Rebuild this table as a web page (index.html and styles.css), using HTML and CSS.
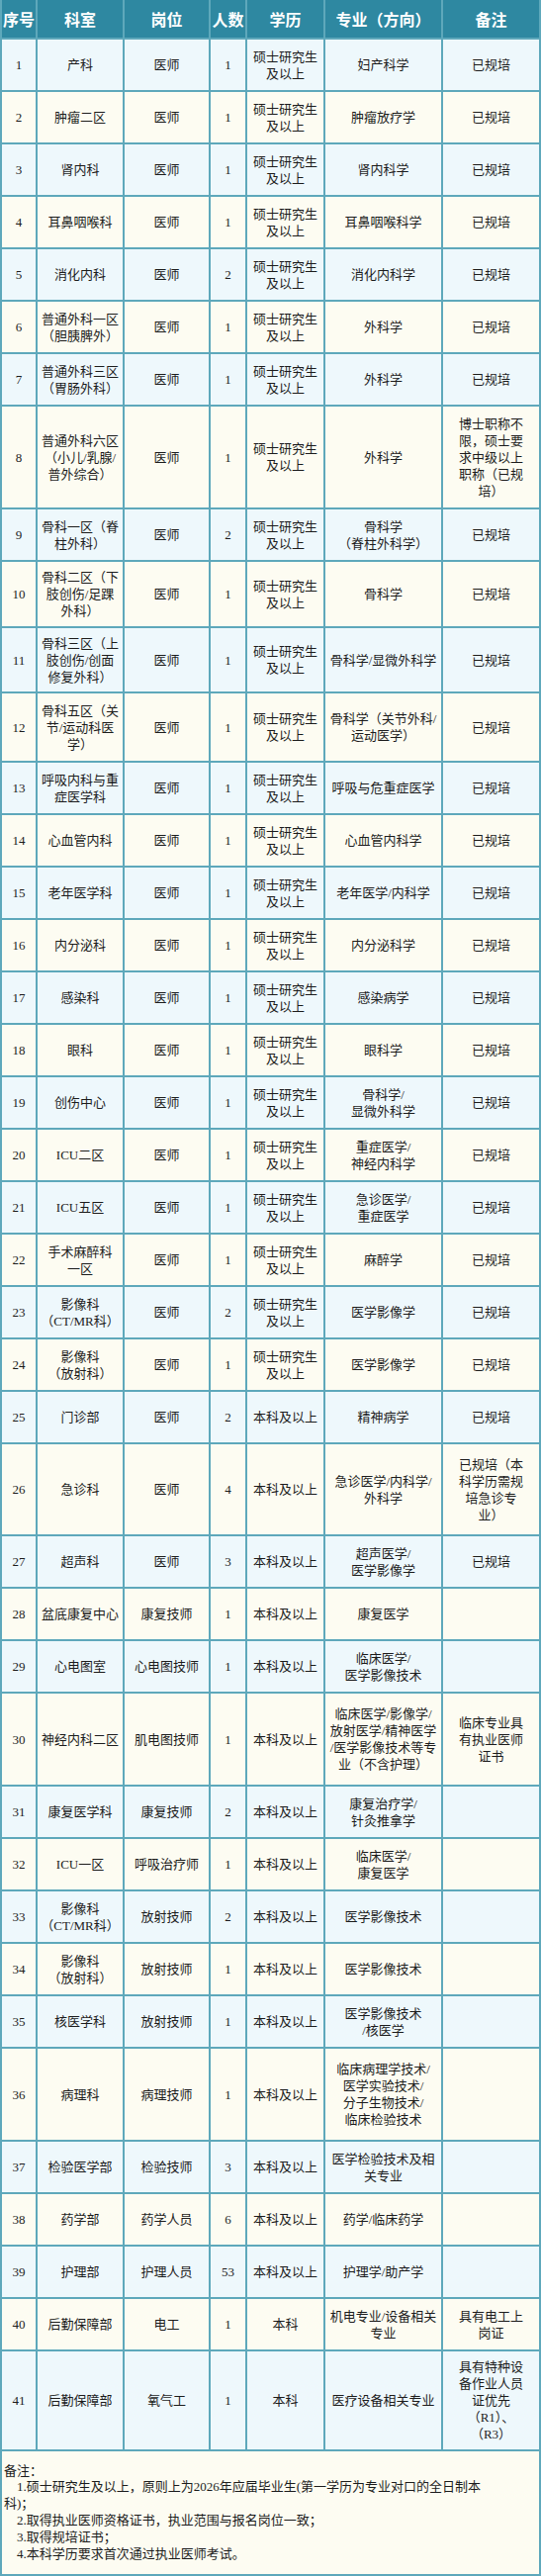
FILE: index.html
```html
<!DOCTYPE html>
<html lang="zh-CN">
<head>
<meta charset="utf-8">
<title>招聘岗位表</title>
<link rel="stylesheet" href="styles.css">
</head>
<body>
<table class="jobs">
<thead>
<tr class="head">
<th class="c1">序号</th><th class="c2">科室</th><th class="c3">岗位</th><th class="c4">人数</th><th class="c5">学历</th><th class="c6">专业（方向）</th><th class="c7">备注</th>
</tr>
</thead>
<tbody>
<tr class="odd h53"><td>1</td><td>产科</td><td>医师</td><td>1</td><td>硕士研究生<br>及以上</td><td>妇产科学</td><td>已规培</td></tr>
<tr class="even h53"><td>2</td><td>肿瘤二区</td><td>医师</td><td>1</td><td>硕士研究生<br>及以上</td><td>肿瘤放疗学</td><td>已规培</td></tr>
<tr class="odd h53"><td>3</td><td>肾内科</td><td>医师</td><td>1</td><td>硕士研究生<br>及以上</td><td>肾内科学</td><td>已规培</td></tr>
<tr class="even h53"><td>4</td><td>耳鼻咽喉科</td><td>医师</td><td>1</td><td>硕士研究生<br>及以上</td><td>耳鼻咽喉科学</td><td>已规培</td></tr>
<tr class="odd h53"><td>5</td><td>消化内科</td><td>医师</td><td>2</td><td>硕士研究生<br>及以上</td><td>消化内科学</td><td>已规培</td></tr>
<tr class="even h53"><td>6</td><td>普通外科一区<br>（胆胰脾外）</td><td>医师</td><td>1</td><td>硕士研究生<br>及以上</td><td>外科学</td><td>已规培</td></tr>
<tr class="odd h53"><td>7</td><td>普通外科三区<br>（胃肠外科）</td><td>医师</td><td>1</td><td>硕士研究生<br>及以上</td><td>外科学</td><td>已规培</td></tr>
<tr class="even h104"><td>8</td><td>普通外科六区<br>（小儿/乳腺/<br>普外综合）</td><td>医师</td><td>1</td><td>硕士研究生<br>及以上</td><td>外科学</td><td>博士职称不<br>限，硕士要<br>求中级以上<br>职称（已规<br>培）</td></tr>
<tr class="odd h53"><td>9</td><td>骨科一区（脊<br>柱外科）</td><td>医师</td><td>2</td><td>硕士研究生<br>及以上</td><td>骨科学<br>（脊柱外科学）</td><td>已规培</td></tr>
<tr class="even h67"><td>10</td><td>骨科二区（下<br>肢创伤/足踝<br>外科）</td><td>医师</td><td>1</td><td>硕士研究生<br>及以上</td><td>骨科学</td><td>已规培</td></tr>
<tr class="odd h66"><td>11</td><td>骨科三区（上<br>肢创伤/创面<br>修复外科）</td><td>医师</td><td>1</td><td>硕士研究生<br>及以上</td><td>骨科学/显微外科学</td><td>已规培</td></tr>
<tr class="even h70"><td>12</td><td>骨科五区（关<br>节/运动科医<br>学）</td><td>医师</td><td>1</td><td>硕士研究生<br>及以上</td><td>骨科学（关节外科/<br>运动医学）</td><td>已规培</td></tr>
<tr class="odd h53"><td>13</td><td>呼吸内科与重<br>症医学科</td><td>医师</td><td>1</td><td>硕士研究生<br>及以上</td><td>呼吸与危重症医学</td><td>已规培</td></tr>
<tr class="even h53"><td>14</td><td>心血管内科</td><td>医师</td><td>1</td><td>硕士研究生<br>及以上</td><td>心血管内科学</td><td>已规培</td></tr>
<tr class="odd h53"><td>15</td><td>老年医学科</td><td>医师</td><td>1</td><td>硕士研究生<br>及以上</td><td>老年医学/内科学</td><td>已规培</td></tr>
<tr class="even h53"><td>16</td><td>内分泌科</td><td>医师</td><td>1</td><td>硕士研究生<br>及以上</td><td>内分泌科学</td><td>已规培</td></tr>
<tr class="odd h53"><td>17</td><td>感染科</td><td>医师</td><td>1</td><td>硕士研究生<br>及以上</td><td>感染病学</td><td>已规培</td></tr>
<tr class="even h53"><td>18</td><td>眼科</td><td>医师</td><td>1</td><td>硕士研究生<br>及以上</td><td>眼科学</td><td>已规培</td></tr>
<tr class="odd h53"><td>19</td><td>创伤中心</td><td>医师</td><td>1</td><td>硕士研究生<br>及以上</td><td>骨科学/<br>显微外科学</td><td>已规培</td></tr>
<tr class="even h53"><td>20</td><td>ICU二区</td><td>医师</td><td>1</td><td>硕士研究生<br>及以上</td><td>重症医学/<br>神经内科学</td><td>已规培</td></tr>
<tr class="odd h53"><td>21</td><td>ICU五区</td><td>医师</td><td>1</td><td>硕士研究生<br>及以上</td><td>急诊医学/<br>重症医学</td><td>已规培</td></tr>
<tr class="even h53"><td>22</td><td>手术麻醉科<br>一区</td><td>医师</td><td>1</td><td>硕士研究生<br>及以上</td><td>麻醉学</td><td>已规培</td></tr>
<tr class="odd h53"><td>23</td><td>影像科<br>（CT/MR科）</td><td>医师</td><td>2</td><td>硕士研究生<br>及以上</td><td>医学影像学</td><td>已规培</td></tr>
<tr class="even h53"><td>24</td><td>影像科<br>（放射科）</td><td>医师</td><td>1</td><td>硕士研究生<br>及以上</td><td>医学影像学</td><td>已规培</td></tr>
<tr class="odd h53"><td>25</td><td>门诊部</td><td>医师</td><td>2</td><td>本科及以上</td><td>精神病学</td><td>已规培</td></tr>
<tr class="even h93"><td>26</td><td>急诊科</td><td>医师</td><td>4</td><td>本科及以上</td><td>急诊医学/内科学/<br>外科学</td><td>已规培（本<br>科学历需规<br>培急诊专<br>业）</td></tr>
<tr class="odd h53"><td>27</td><td>超声科</td><td>医师</td><td>3</td><td>本科及以上</td><td>超声医学/<br>医学影像学</td><td>已规培</td></tr>
<tr class="even h53"><td>28</td><td>盆底康复中心</td><td>康复技师</td><td>1</td><td>本科及以上</td><td>康复医学</td><td></td></tr>
<tr class="odd h53"><td>29</td><td>心电图室</td><td>心电图技师</td><td>1</td><td>本科及以上</td><td>临床医学/<br>医学影像技术</td><td></td></tr>
<tr class="even h94"><td>30</td><td>神经内科二区</td><td>肌电图技师</td><td>1</td><td>本科及以上</td><td>临床医学/影像学/<br>放射医学/精神医学<br>/医学影像技术等专<br>业（不含护理）</td><td>临床专业具<br>有执业医师<br>证书</td></tr>
<tr class="odd h53"><td>31</td><td>康复医学科</td><td>康复技师</td><td>2</td><td>本科及以上</td><td>康复治疗学/<br>针灸推拿学</td><td></td></tr>
<tr class="even h53"><td>32</td><td>ICU一区</td><td>呼吸治疗师</td><td>1</td><td>本科及以上</td><td>临床医学/<br>康复医学</td><td></td></tr>
<tr class="odd h53"><td>33</td><td>影像科<br>（CT/MR科）</td><td>放射技师</td><td>2</td><td>本科及以上</td><td>医学影像技术</td><td></td></tr>
<tr class="even h53"><td>34</td><td>影像科<br>（放射科）</td><td>放射技师</td><td>1</td><td>本科及以上</td><td>医学影像技术</td><td></td></tr>
<tr class="odd h53"><td>35</td><td>核医学科</td><td>放射技师</td><td>1</td><td>本科及以上</td><td>医学影像技术<br>/核医学</td><td></td></tr>
<tr class="even h94"><td>36</td><td>病理科</td><td>病理技师</td><td>1</td><td>本科及以上</td><td>临床病理学技术/<br>医学实验技术/<br>分子生物技术/<br>临床检验技术</td><td></td></tr>
<tr class="odd h53"><td>37</td><td>检验医学部</td><td>检验技师</td><td>3</td><td>本科及以上</td><td>医学检验技术及相<br>关专业</td><td></td></tr>
<tr class="even h53"><td>38</td><td>药学部</td><td>药学人员</td><td>6</td><td>本科及以上</td><td>药学/临床药学</td><td></td></tr>
<tr class="odd h53"><td>39</td><td>护理部</td><td>护理人员</td><td>53</td><td>本科及以上</td><td>护理学/助产学</td><td></td></tr>
<tr class="even h53"><td>40</td><td>后勤保障部</td><td>电工</td><td>1</td><td>本科</td><td>机电专业/设备相关<br>专业</td><td>具有电工上<br>岗证</td></tr>
<tr class="odd h101"><td>41</td><td>后勤保障部</td><td>氧气工</td><td>1</td><td>本科</td><td>医疗设备相关专业</td><td>具有特种设<br>备作业人员<br>证优先<br>（R1）、<br>（R3）</td></tr>
<tr class="even notes-row"><td colspan="7" class="notes">
<div class="note-title">备注：</div>
<div class="note">1.硕士研究生及以上，原则上为2026年应届毕业生(第一学历为专业对口的全日制本<br>科)；</div>
<div class="note">2.取得执业医师资格证书，执业范围与报名岗位一致；</div>
<div class="note">3.取得规培证书；</div>
<div class="note">4.本科学历要求首次通过执业医师考试。</div>
</td></tr>
</tbody>
</table>
</body>
</html>
```

FILE: styles.css
```css
html, body {
  margin: 0;
  padding: 0;
  background: #ffffff;
}

body {
  font-family: "Liberation Serif", "Noto Sans CJK SC", serif;
  font-size: 13px;
  color: #1c1c1c;
}

.jobs {
  width: 547px;
  border-collapse: separate;
  border-spacing: 0;
  table-layout: fixed;
}

.jobs th,
.jobs td {
  box-sizing: border-box;
  border-right: 2px solid #5ea8bb;
  border-bottom: 2px solid #5ea8bb;
  padding: 0;
  text-align: center;
  vertical-align: middle;
  line-height: 17px;
  white-space: nowrap;
  overflow: hidden;
}

.jobs tr > :first-child {
  border-left: 2px solid #5ea8bb;
}

.head th {
  background: #2e88a1;
  color: #ffffff;
  font-family: "Noto Sans CJK SC", sans-serif;
  font-weight: bold;
  font-size: 16px;
  line-height: 20px;
}

.c1 { width: 38px; }
.c2 { width: 88px; }
.c3 { width: 87px; }
.c4 { width: 37px; }
.c5 { width: 79px; }
.c6 { width: 119px; }
.c7 { width: 99px; }

.head { height: 40px; }
.h53 { height: 53px; }
.h66 { height: 66px; }
.h67 { height: 67px; }
.h70 { height: 70px; }
.h93 { height: 93px; }
.h94 { height: 94px; }
.h101 { height: 101px; }
.h104 { height: 104px; }
.notes-row { height: 126px; }

.odd td { background: #eef8fc; }
.even td { background: #fdfcf2; }

.jobs td.notes {
  text-align: left;
  white-space: normal;
  line-height: 16.8px;
  padding: 0 2px;
}

.note {
  text-indent: 13px;
}
```
